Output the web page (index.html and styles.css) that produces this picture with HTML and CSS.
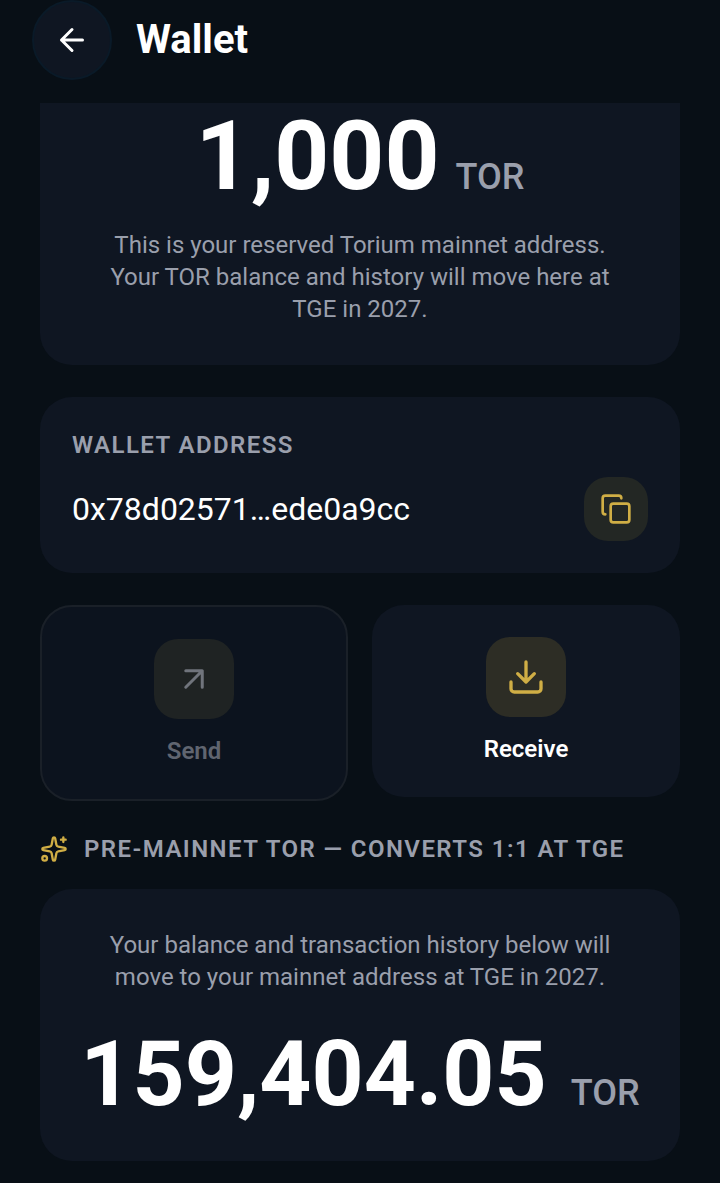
FILE: index.html
```
<!DOCTYPE html>
<html lang="en">
<head>
  <meta charset="UTF-8" />
  <meta name="viewport" content="width=device-width, initial-scale=1.0" />
  <title>Wallet</title>
  <link rel="stylesheet" href="styles.css">
</head>
<body>
  <header class="header">
    <button class="back-btn" type="button" aria-label="Back">
      <svg class="icon" width="36" height="36" viewBox="0 0 24 24"><path d="m12 19-7-7 7-7M19 12H5" /></svg>
    </button>
    <h1>Wallet</h1>
  </header>

  <main class="container">
    <section class="card balance-card">
      <p class="balance"><span class="amount">1,000</span><span class="unit">TOR</span></p>
      <p class="note">This is your reserved Torium mainnet address. Your TOR balance and history will move here at TGE in 2027.</p>
    </section>

    <section class="card address-card">
      <h2 class="label">WALLET ADDRESS</h2>
      <div class="address-row">
        <span class="address">0x78d02571…ede0a9cc</span>
        <button class="copy-btn" type="button" aria-label="Copy address">
          <svg class="icon" width="32" height="32" viewBox="0 0 24 24"><rect x="8" y="8" width="14" height="14" rx="2" /><path d="M4 16c-1.1 0-2-.9-2-2V4c0-1.100.9-2 2-2h10c1.100 0 2 .9 2 2" /></svg>
        </button>
      </div>
    </section>

    <div class="actions">
      <button class="action action-send" type="button" disabled>
        <span class="action-icon">
          <svg class="icon" width="36" height="36" viewBox="0 0 24 24"><path d="M6.500 6.500h11v11M6.500 17.500l11-11" /></svg>
        </span>
        <span>Send</span>
      </button>
      <button class="action" type="button">
        <span class="action-icon">
          <svg class="icon" width="40" height="40" viewBox="0 0 24 24"><path d="M12 15V3M21 15v4a2 2 0 0 1-2 2H5a2 2 0 0 1-2-2v-4M7 10l5 5 5-5" /></svg>
        </span>
        <span>Receive</span>
      </button>
    </div>

    <h2 class="label section-title">
      <svg class="icon" width="28" height="28" viewBox="0 0 24 24"><path d="M11.017 2.814a1 1 0 0 1 1.966 0l1.051 5.558a2 2 0 0 0 1.594 1.594l5.558 1.051a1 1 0 0 1 0 1.966l-5.558 1.051a2 2 0 0 0-1.594 1.594l-1.051 5.558a1 1 0 0 1-1.966 0l-1.051-5.558a2 2 0 0 0-1.594-1.594l-5.558-1.051a1 1 0 0 1 0-1.966l5.558-1.051a2 2 0 0 0 1.594-1.594zM20 2v4M22 4h-4" /><circle cx="4" cy="20" r="2" /></svg>
      <span>PRE-MAINNET TOR — CONVERTS 1:1 AT TGE</span>
    </h2>

    <section class="card pre-card">
      <p class="note">Your balance and transaction history below will move to your mainnet address at TGE in 2027.</p>
      <p class="balance"><span class="amount">159,404.05</span><span class="unit">TOR</span></p>
    </section>
  </main>
</body>
</html>
```
FILE: styles.css
```
* {
  margin: 0;
  padding: 0;
  box-sizing: border-box;
}

body {
  font-family: Roboto, sans-serif;
  background-color: #080f16;
  color: #fff;
}

button {
  font: inherit;
  color: inherit;
  border: none;
  cursor: pointer;
}

.icon {
  display: block;
  fill: none;
  stroke: currentColor;
  stroke-width: 2;
  stroke-linecap: round;
  stroke-linejoin: round;
}

.header {
  display: flex;
  align-items: center;
  gap: 24px;
  padding: 0 32px 23px;
}

.header h1 {
  font-size: 40px;
  line-height: 48px;
  font-weight: 700;
}

.back-btn {
  display: flex;
  align-items: center;
  justify-content: center;
  width: 80px;
  height: 80px;
  border: 2px solid #0a1a28;
  border-radius: 50%;
  background-color: #0f1622;
}

.container {
  padding: 0 40px 22px;
}

.card {
  background-color: #0f1622;
  border-radius: 32px;
  margin-bottom: 32px;
}

.balance {
  display: flex;
  align-items: baseline;
  justify-content: center;
  gap: 16px;
}

.amount {
  font-size: 96px;
  line-height: 106px;
  font-weight: 700;
}

.unit {
  font-size: 36px;
  line-height: 40px;
  font-weight: 500;
  color: #9a9fac;
}

.note {
  font-size: 24px;
  line-height: 32px;
  text-align: center;
  color: #9a9fac;
}

.balance-card {
  padding: 0 64px 40px;
  border-radius: 0 0 32px 32px;
}

.balance-card .balance {
  margin-bottom: 20px;
}

.address-card {
  padding: 32px;
}

.label {
  font-size: 24px;
  line-height: 32px;
  font-weight: 600;
  letter-spacing: 0.06em;
  color: #9a9fac;
}

.address-row {
  display: flex;
  align-items: center;
  justify-content: space-between;
  margin-top: 16px;
}

.address {
  font-size: 32px;
  line-height: 40px;
}

.copy-btn {
  display: flex;
  align-items: center;
  justify-content: center;
  width: 64px;
  height: 64px;
  border-radius: 24px;
  background-color: #232724;
  color: #d0ae45;
}

.actions {
  display: grid;
  grid-template-columns: 1fr 1fr;
  align-items: start;
  gap: 24px;
  margin-bottom: 32px;
}

.action {
  display: flex;
  flex-direction: column;
  align-items: center;
  gap: 16px;
  padding: 32px;
  border-radius: 32px;
  background-color: #0f1622;
  font-size: 24px;
  line-height: 32px;
  font-weight: 600;
}

.action-icon {
  display: flex;
  align-items: center;
  justify-content: center;
  width: 80px;
  height: 80px;
  border-radius: 24px;
  background-color: #2d2d25;
  color: #d0ae45;
}

.action-send {
  border: 2px solid #1a2028;
  background-color: #0c131e;
  color: #606570;
  cursor: default;
}

.action-send .action-icon {
  background-color: #1f2323;
  color: #70747c;
}

.section-title {
  display: flex;
  align-items: center;
  gap: 16px;
  margin-bottom: 24px;
}

.section-title .icon {
  color: #d0ae45;
}

.pre-card {
  padding: 40px 40px 34px;
  margin-bottom: 0;
}

.pre-card .note {
  padding: 0 24px;
}

.pre-card .balance {
  gap: 24px;
  margin-top: 28px;
}

.pre-card .amount {
  font-size: 91px;
}
```
